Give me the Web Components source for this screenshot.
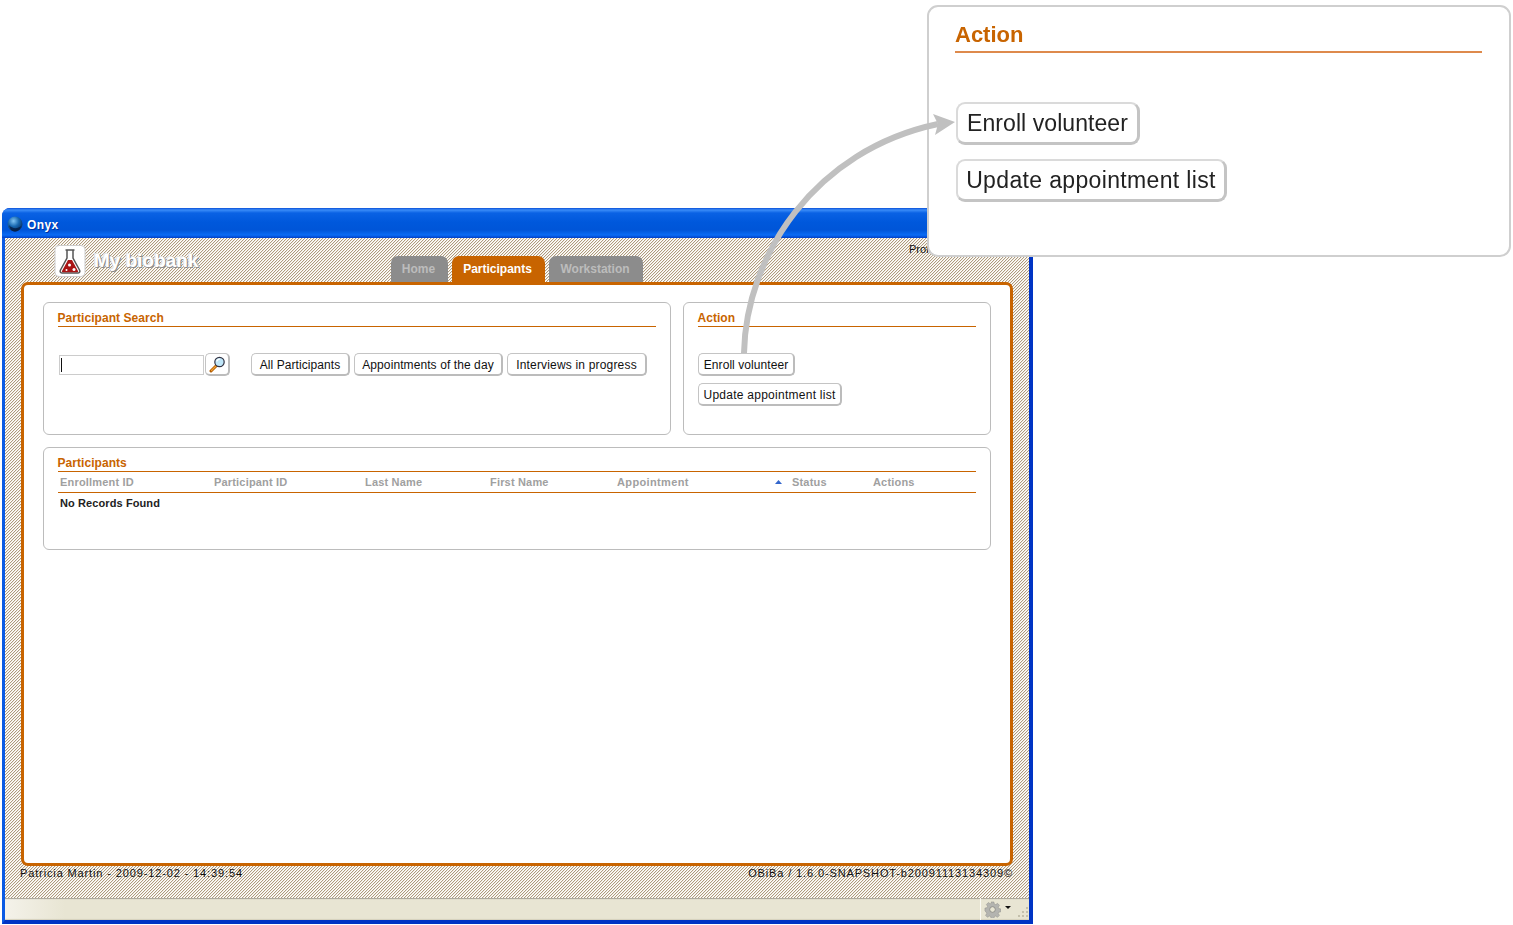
<!DOCTYPE html>
<html>
<head>
<meta charset="utf-8">
<title>Onyx</title>
<style>
  html, body { margin: 0; background: #fff; }
  body {
    font-family: 'Liberation Sans', Arial, sans-serif;
    height: 925px;
    overflow: hidden;
    padding-top: 208px;
    box-sizing: border-box;
    position: relative;
  }
</style>
</head>
<body>
<onyx-window>
  <onyx-header slot="header"></onyx-header>
  <onyx-panel title="Participant Search" style="height:133px">
    <search-row></search-row>
  </onyx-panel>
  <onyx-panel title="Action" style="height:133px">
    <action-list></action-list>
  </onyx-panel>
  <onyx-panel title="Participants" class="wide" style="grid-column:1 / 3;height:103px">
    <participant-table></participant-table>
  </onyx-panel>
</onyx-window>
<action-callout></action-callout>
<callout-arrow></callout-arrow>

<script>
const HATCH = "url(\"data:image/svg+xml,%3Csvg xmlns='http://www.w3.org/2000/svg' width='3' height='3' shape-rendering='crispEdges'%3E%3Crect width='3' height='3' fill='%23fff'/%3E%3Cpath fill='%23ae9a7e' d='M2 0h1v1H2zM1 1h1v1H1zM0 2h1v1H0z'/%3E%3Cpath fill='%23efeadf' d='M0 0h1v1H0zM2 1h1v1H2zM1 2h1v1H1z'/%3E%3C/svg%3E\")"

class OnyxWindow extends HTMLElement {
  constructor () {
    super()
    this.shadow = this.attachShadow({ mode: 'open' })
  }

  connectedCallback () {
    this.shadow.innerHTML = /* html */`
      <style>
        :host {
          display: flex;
          flex-direction: column;
          box-sizing: border-box;
          width: 1031px;
          height: 716px;
          margin-left: 2px;
          border-radius: 8px 8px 0 0;
          overflow: hidden;
          background: #0048d8;
        }
        .titlebar {
          height: 30px;
          flex: none;
          display: flex;
          align-items: center;
          gap: 4px;
          padding: 4px 0 0 5px;
          box-sizing: border-box;
          color: #fff;
          font-size: 12px;
          font-weight: bold;
          letter-spacing: .4px;
          text-shadow: 1px 1px 0 #0030a0;
          background: linear-gradient(#0a4fd8 0, #3a8cf8 2px, #0a62e4 5px, #0058dc 14px, #0055d8 22px, #0a6cf4 27px, #0040c8 30px);
        }
        .titlebar svg { width: 16px; height: 16px; margin-top: -2px; }
        .frame {
          flex: 1;
          display: flex;
          flex-direction: column;
          min-height: 0;
          border-left: 3px solid #0a5ae4;
          border-right: 4px solid #0034c4;
          border-bottom: 4px solid #0034c4;
        }
        .hatch {
          flex: 1;
          min-height: 0;
          display: flex;
          flex-direction: column;
          padding: 0 16px;
          background: ${HATCH};
        }
        .main {
          height: 584px;
          flex: none;
          box-sizing: border-box;
          background: #fff;
          border: 3px solid #c86400;
          border-radius: 7px;
          padding: 17px 19px;
          display: grid;
          grid-template-columns: 628px 308px;
          gap: 12px;
          align-content: start;
        }
        .foot {
          display: flex;
          justify-content: space-between;
          font-size: 11px;
          letter-spacing: .87px;
          color: #111;
          padding: 1px 0 0 0;
          margin-left: -1px;
        }
        .status {
          height: 22px;
          flex: none;
          display: flex;
          justify-content: flex-end;
          align-items: center;
          background: linear-gradient(90deg, #f4f2ea 0, #e8e5d3 60px, #e8e5d3 100%);
          box-shadow: inset 0 2px 1px -1px #a8a498, inset 0 -2px 1px -1px #d4d0bc;
        }
        .cell {
          width: 49px;
          height: 100%;
          box-sizing: border-box;
          border-left: 1px solid #fbfaf4;
          display: flex;
          align-items: center;
          padding-left: 3px;
          gap: 4px;
        }
        .cell svg { flex: none; }
      </style>
      <div class="titlebar">
        <svg viewBox="0 0 16 16">
          <defs><radialGradient id="g" cx=".4" cy=".3" r=".8"><stop offset="0" stop-color="#7fc4f4"/><stop offset=".45" stop-color="#1868b0"/><stop offset="1" stop-color="#04204c"/></radialGradient></defs>
          <circle cx="8" cy="8" r="7.500" fill="url(#g)"/>
          <path d="M2 9c3 4 9 4 12 1-1 4-4 5.500-6 5.500-3 0-5-2-6-6.500z" fill="#02163a" opacity=".7"/>
        </svg>
        <span>Onyx</span>
      </div>
      <div class="frame">
        <div class="hatch">
          <slot name="header"></slot>
          <div class="main"><slot></slot></div>
          <div class="foot">
            <span>Patricia Martin - 2009-12-02 - 14:39:54</span>
            <span>OBiBa / 1.6.0-SNAPSHOT-b20091113134309©</span>
          </div>
        </div>
        <div class="status">
          <div class="cell">
            <svg width="17" height="17" viewBox="0 0 18 18">
              <path fill="#b4b4b0" stroke="#8c8c88" stroke-width=".5" d="M7.500 1h3l.4 2.200 1.500.6 1.900-1.300 2.100 2.100-1.300 1.900.6 1.500 2.200.4v3l-2.200.4-.6 1.500 1.300 1.900-2.100 2.100-1.900-1.300-1.500.6-.4 2.200h-3l-.4-2.200-1.500-.6-1.900 1.300-2.100-2.100 1.300-1.900-.6-1.500L1 10.500v-3l2.200-.4.600-1.500-1.300-1.900 2.100-2.100 1.900 1.300 1.500-.6z"/>
              <circle cx="9" cy="9" r="3" fill="#e8e5d3" stroke="#8c8c88"/>
            </svg>
            <svg width="6" height="4" viewBox="0 0 6 4" style="margin-top:-3px"><path d="M0 0h6L3 3z" fill="#111"/></svg>
            <svg width="12" height="12" viewBox="0 0 12 12" style="margin:6px 0 0 2px"><g fill="#c4c0ac"><rect x="9" y="1" width="2" height="2"/><rect x="5" y="5" width="2" height="2"/><rect x="9" y="5" width="2" height="2"/><rect x="1" y="9" width="2" height="2"/><rect x="5" y="9" width="2" height="2"/><rect x="9" y="9" width="2" height="2"/></g></svg>
          </div>
        </div>
      </div>
    `
  }
}

class OnyxHeader extends HTMLElement {
  constructor () {
    super()
    this.shadow = this.attachShadow({ mode: 'open' })
  }

  connectedCallback () {
    this.shadow.innerHTML = /* html */`
      <style>
        :host {
          display: flex;
          align-items: flex-end;
          height: 44px;
          padding-left: 33px;
        }
        .logo {
          width: 32px;
          height: 32px;
          margin-bottom: 5px;
          flex: none;
        }
        .name {
          width: 297px;
          margin-left: 8px;
          align-self: flex-start;
          margin-top: 12px;
          font-size: 19px;
          line-height: 22px;
          font-weight: bold;
          color: #fff;
          text-shadow: 1px 1px 0 #8a8a8a, -1px -1px 0 #e4e4e4, 1px 0 0 #aaa, 0 1px 0 #aaa;
        }
        .tabs { display: flex; gap: 4px; }
        .tab {
          height: 26px;
          box-sizing: border-box;
          padding: 6px 2px 0 0;
          text-align: center;
          font-size: 12px;
          font-weight: bold;
          border-radius: 7px 7px 0 0;
          background: #8c8c8c;
          color: #bcbcbc;
        }
        .tab.on { background: #c86400; color: #fff; }
        .pro {
          align-self: flex-start;
          margin: 5px 0 0 266px;
          font-size: 11px;
          color: #111;
        }
      </style>
      <svg class="logo" viewBox="0 0 31 32">
        <rect x=".5" y=".5" width="30" height="31" rx="4" fill="#fff" stroke="#ccc"/>
        <path d="M11 5h9M12.500 5v8L6 25c-.8 1.600 0 3 1.800 3h15.400c1.800 0 2.600-1.400 1.800-3l-6.500-12V5" fill="none" stroke="#555" stroke-width="1.500"/>
        <path d="M13.500 15h4l6 11c.3.800 0 1.200-1 1.200H8.500c-1 0-1.300-.4-1-1.200z" fill="#a81414"/>
        <circle cx="15" cy="20" r="1.500" fill="#fff"/><circle cx="19.500" cy="24.500" r="1.500" fill="#fff"/><circle cx="12" cy="25" r="1" fill="#fff"/>
      </svg>
      <div class="name">My biobank</div>
      <div class="tabs">
        <div class="tab" style="width:57px">Home</div>
        <div class="tab on" style="width:93px">Participants</div>
        <div class="tab" style="width:94px">Workstation</div>
      </div>
      <div class="pro">Profile</div>
    `
  }
}

class OnyxPanel extends HTMLElement {
  constructor () {
    super()
    this.shadow = this.attachShadow({ mode: 'open' })
  }

  connectedCallback () {
    this.shadow.innerHTML = /* html */`
      <style>
        :host {
          display: block;
          box-sizing: border-box;
          border: 1px solid #bcbcbc;
          border-radius: 6px;
          padding: 0 14px;
          background: #fff;
        }
        h2 {
          margin: 0;
          height: 24px;
          box-sizing: border-box;
          padding: 8px 0 0 0;
          font-size: 12px;
          line-height: 14px;
          font-weight: bold;
          letter-spacing: .05px;
          color: #c86400;
          border-bottom: 1px solid #c86400;
          text-indent: -.5px;
        }
      </style>
      <h2>${this.getAttribute('title')}</h2>
      <slot></slot>
    `
  }
}

class OnyxButton extends HTMLElement {
  constructor () {
    super()
    this.shadow = this.attachShadow({ mode: 'open' })
  }

  connectedCallback () {
    this.shadow.innerHTML = /* html */`
      <style>
        :host {
          display: inline-flex;
          align-items: center;
          justify-content: center;
          box-sizing: border-box;
          height: 23px;
          padding-top: 2px;
          background: #fff;
          color: #111;
          font-size: 12px;
          border: 1px solid #c4c4c4;
          border-right: 2px solid #bcbcbc;
          border-bottom: 2px solid #bcbcbc;
          border-radius: 5px;
          white-space: nowrap;
          flex: none;
        }
      </style>
      <slot></slot>
    `
  }
}

class SearchRow extends HTMLElement {
  constructor () {
    super()
    this.shadow = this.attachShadow({ mode: 'open' })
  }

  connectedCallback () {
    this.shadow.innerHTML = /* html */`
      <style>
        :host {
          display: flex;
          align-items: center;
          margin-top: 26px;
          margin-left: 1px;
        }
        .input {
          width: 145px;
          height: 20px;
          box-sizing: border-box;
          border: 1px solid #ccc;
          margin-right: 1px;
          padding: 2px 1px;
          flex: none;
        }
        .input i { display: block; width: 1px; height: 14px; background: #111; }
        .gap { width: 21px; flex: none; }
        onyx-button + onyx-button { margin-left: 4px; }
        svg { display: block; margin-top: -2px; }
      </style>
      <div class="input"><i></i></div>
      <onyx-button style="width:25px">
        <svg width="17" height="17" viewBox="0 0 17 17">
          <path d="M7.500 9.500 2 15" stroke="#b05a00" stroke-width="3" stroke-linecap="round"/>
          <path d="M7.500 9.500 2.500 14.500" stroke="#f0a030" stroke-width="1.200" stroke-linecap="round"/>
          <circle cx="10.500" cy="6" r="4.700" fill="#bfe6f8" stroke="#334" stroke-width="1.200"/>
          <path d="M7.800 5.500a3 3 0 0 1 3-2.400" fill="none" stroke="#fff" stroke-width="1.200"/>
        </svg>
      </onyx-button>
      <div class="gap"></div>
      <onyx-button style="width:99px;letter-spacing:.07px">All Participants</onyx-button>
      <onyx-button style="width:149px;letter-spacing:.09px">Appointments of the day</onyx-button>
      <onyx-button style="width:140px;letter-spacing:.18px">Interviews in progress</onyx-button>
    `
  }
}

class ActionList extends HTMLElement {
  constructor () {
    super()
    this.shadow = this.attachShadow({ mode: 'open' })
  }

  connectedCallback () {
    this.shadow.innerHTML = /* html */`
      <style>
        :host {
          display: flex;
          flex-direction: column;
          align-items: flex-start;
          gap: 7px;
          margin-top: 26px;
        }
      </style>
      <onyx-button style="width:97px;letter-spacing:.07px">Enroll volunteer</onyx-button>
      <onyx-button style="width:144px;letter-spacing:.26px">Update appointment list</onyx-button>
    `
  }
}

class ParticipantTable extends HTMLElement {
  constructor () {
    super()
    this.shadow = this.attachShadow({ mode: 'open' })
  }

  connectedCallback () {
    this.shadow.innerHTML = /* html */`
      <style>
        :host { display: block; font-size: 11px; }
        .head {
          display: grid;
          grid-template-columns: 154px 151px 125px 127px 175px 81px 1fr;
          height: 21px;
          box-sizing: border-box;
          border-bottom: 1px solid #c86400;
          color: #a0a0a0;
          font-weight: bold;
          line-height: 20px;
          letter-spacing: .18px;
        }
        .head span { padding-left: 2px; }
        .sort { display: flex; justify-content: space-between; align-items: center; padding-right: 8px; letter-spacing: .36px; }
        .sort svg { display: block; }
        .empty {
          padding: 4px 0 0 2px;
          font-weight: bold;
          color: #222;
          line-height: 13px;
          letter-spacing: .1px;
        }
      </style>
      <div class="head">
        <span>Enrollment ID</span>
        <span>Participant ID</span>
        <span>Last Name</span>
        <span>First Name</span>
        <span class="sort">Appointment <svg width="7" height="4" viewBox="0 0 7 4"><path d="M3.500 0 7 4H0z" fill="#3366cc"/></svg></span>
        <span>Status</span>
        <span>Actions</span>
      </div>
      <div class="empty">No Records Found</div>
    `
  }
}

class ActionCallout extends HTMLElement {
  constructor () {
    super()
    this.shadow = this.attachShadow({ mode: 'open' })
  }

  connectedCallback () {
    this.shadow.innerHTML = /* html */`
      <style>
        :host {
          position: absolute;
          left: 927px;
          top: 5px;
          width: 584px;
          height: 252px;
          box-sizing: border-box;
          background: #fff;
          border: 2px solid #cfcfcf;
          border-radius: 11px;
          padding: 0 27px 0 26px;
          z-index: 2;
        }
        h2 {
          margin: 0;
          height: 46px;
          box-sizing: border-box;
          padding-top: 14px;
          font-size: 22px;
          line-height: 28px;
          font-weight: bold;
          color: #c86400;
          border-bottom: 2px solid #de8a4c;
        }
        h2 span { filter: blur(.4px); display: inline-block; }
        .list {
          display: flex;
          flex-direction: column;
          align-items: flex-start;
          gap: 14px;
          margin: 49px 0 0 1px;
        }
        .btn {
          box-sizing: border-box;
          height: 43px;
          display: flex;
          align-items: center;
          justify-content: center;
          background: #fff;
          color: #222;
          font-size: 23px;
          border: 2px solid #dadada;
          border-right: 3px solid #c4c4c4;
          border-bottom: 3px solid #c4c4c4;
          border-radius: 9px;
        }
        .btn span { filter: blur(.4px); }
      </style>
      <h2><span>Action</span></h2>
      <div class="list">
        <div class="btn" style="width:184px"><span style="letter-spacing:.07px">Enroll volunteer</span></div>
        <div class="btn" style="width:271px"><span style="letter-spacing:.35px">Update appointment list</span></div>
      </div>
    `
  }
}

class CalloutArrow extends HTMLElement {
  constructor () {
    super()
    this.shadow = this.attachShadow({ mode: 'open' })
  }

  connectedCallback () {
    this.shadow.innerHTML = /* html */`
      <style>
        :host {
          position: absolute;
          left: 0;
          top: 0;
          z-index: 3;
          pointer-events: none;
        }
        svg { display: block; }
      </style>
      <svg width="1513" height="925" viewBox="0 0 1513 925">
        <path d="M744 353C746 255 815 150 938 124" fill="none" stroke="#c0c0c0" stroke-width="6"/>
        <path d="M955 122 933 114 938 124 935 135z" fill="#c0c0c0"/>
      </svg>
    `
  }
}

customElements.define('onyx-window', OnyxWindow)
customElements.define('onyx-header', OnyxHeader)
customElements.define('onyx-panel', OnyxPanel)
customElements.define('onyx-button', OnyxButton)
customElements.define('search-row', SearchRow)
customElements.define('action-list', ActionList)
customElements.define('participant-table', ParticipantTable)
customElements.define('action-callout', ActionCallout)
customElements.define('callout-arrow', CalloutArrow)
</script>
</body>
</html>
